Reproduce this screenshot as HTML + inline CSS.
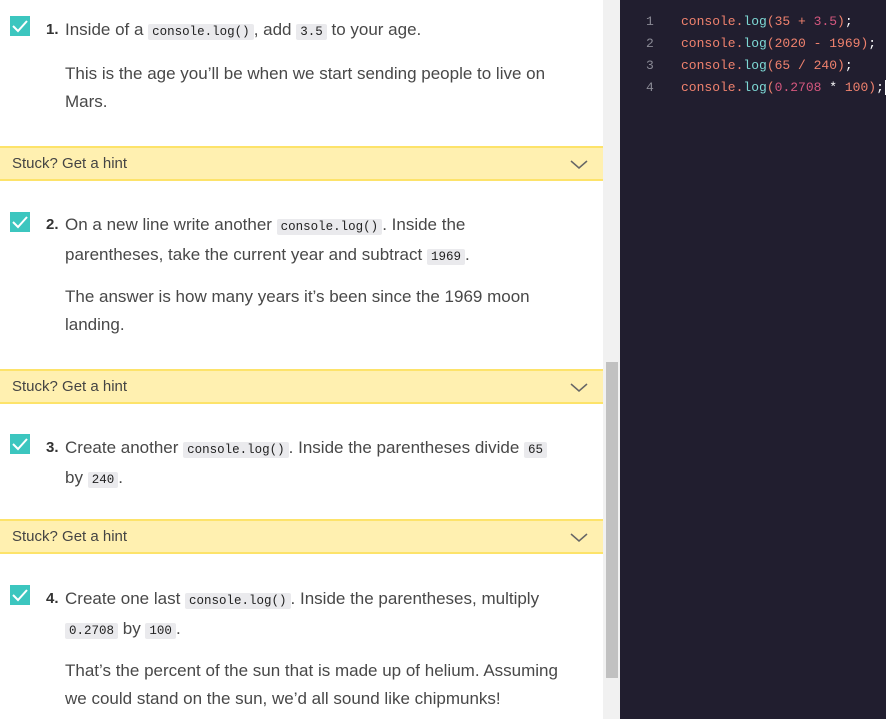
<!DOCTYPE html>
<html><head><meta charset="utf-8"><style>
*{margin:0;padding:0;box-sizing:border-box}
body{width:886px;height:719px;overflow:hidden;background:#fff;font-family:"Liberation Sans",sans-serif;color:#484848;position:relative}
.l{position:absolute;left:0;width:603px;height:719px;background:#fff}
.sb{position:absolute;left:603px;top:0;width:17px;height:719px;background:#f1f1f1}
.th{position:absolute;left:3px;top:362px;width:12px;height:316px;background:#c1c1c1}
.ed{position:absolute;left:620px;top:0;width:266px;height:719px;background:#211e2f}
.cb{position:absolute;left:10px;width:20px;height:20px;background:#3cc6bf}
.cb svg{position:absolute;left:2px;top:3px}
.n{position:absolute;left:46px;font-size:15px;font-weight:bold;color:#333}
.t{position:absolute;left:65px;font-size:17px;line-height:28px;white-space:nowrap}
code{font-family:"Liberation Mono",monospace;font-size:12.5px;background:#eaeaed;padding:1px 4px;border-radius:2px;color:#222}
.h{position:absolute;left:0;width:603px;height:35px;background:#fff0b0;border-top:2px solid #fde36a;border-bottom:2px solid #fde36a;font-size:15px;line-height:32px;padding-left:12px;color:#444}
.h svg{position:absolute;left:570px;top:12px}
.cl{position:absolute;font-family:"Liberation Mono",monospace;font-size:13px;line-height:22px;white-space:pre}
.ln{left:646px;color:#8a8a95}
.cd{left:681px;color:#f0826e}
.f{color:#7ed9d5}.p{color:#d4577e}.w{color:#fff}
</style></head><body>
<div class="l">
<div class="cb" style="top:16px"><svg width="16" height="14"><path d="M1 7 L6 12 L15 2" stroke="#fff" stroke-width="2" fill="none"/></svg></div>
<div class="n" style="top:21px">1.</div>
<div class="t" style="top:16px">Inside of a <code>console.log()</code>, add <code>3.5</code> to your age.</div>
<div class="t" style="top:60px">This is the age you’ll be when we start sending people to live on<br>Mars.</div>
<div class="h" style="top:146px">Stuck? Get a hint<svg width="18" height="10"><path d="M1 1 L9 8 L17 1" stroke="#666" stroke-width="1.5" fill="none"/></svg></div>

<div class="cb" style="top:212px"><svg width="16" height="14"><path d="M1 7 L6 12 L15 2" stroke="#fff" stroke-width="2" fill="none"/></svg></div>
<div class="n" style="top:216px">2.</div>
<div class="t" style="top:211px">On a new line write another <code>console.log()</code>. Inside the<br>parentheses, take the current year and subtract <code>1969</code>.</div>
<div class="t" style="top:283px">The answer is how many years it’s been since the 1969 moon<br>landing.</div>
<div class="h" style="top:369px">Stuck? Get a hint<svg width="18" height="10"><path d="M1 1 L9 8 L17 1" stroke="#666" stroke-width="1.5" fill="none"/></svg></div>

<div class="cb" style="top:434px"><svg width="16" height="14"><path d="M1 7 L6 12 L15 2" stroke="#fff" stroke-width="2" fill="none"/></svg></div>
<div class="n" style="top:439px">3.</div>
<div class="t" style="top:434px">Create another <code>console.log()</code>. Inside the parentheses divide <code>65</code><br>by <code>240</code>.</div>
<div class="h" style="top:519px">Stuck? Get a hint<svg width="18" height="10"><path d="M1 1 L9 8 L17 1" stroke="#666" stroke-width="1.5" fill="none"/></svg></div>

<div class="cb" style="top:585px"><svg width="16" height="14"><path d="M1 7 L6 12 L15 2" stroke="#fff" stroke-width="2" fill="none"/></svg></div>
<div class="n" style="top:590px">4.</div>
<div class="t" style="top:585px">Create one last <code>console.log()</code>. Inside the parentheses, multiply<br><code>0.2708</code> by <code>100</code>.</div>
<div class="t" style="top:657px">That’s the percent of the sun that is made up of helium. Assuming<br>we could stand on the sun, we’d all sound like chipmunks!</div>
</div>
<div class="sb"><div class="th"></div></div>
<div class="ed"></div>
<div class="cl ln" style="top:11px">1
2
3
4</div>
<div class="cl cd" style="top:11px">console.<span class="f">log</span>(35 + <span class="p">3.5</span>)<span class="w">;</span>
console.<span class="f">log</span>(2020 - 1969)<span class="w">;</span>
console.<span class="f">log</span>(65 / 240)<span class="w">;</span>
console.<span class="f">log</span>(<span class="p">0.2708</span> <span class="w">*</span> 100)<span class="w">;</span><span class="w" style="border-left:1px solid #fff;margin-left:1px"></span></div>
</body></html>
